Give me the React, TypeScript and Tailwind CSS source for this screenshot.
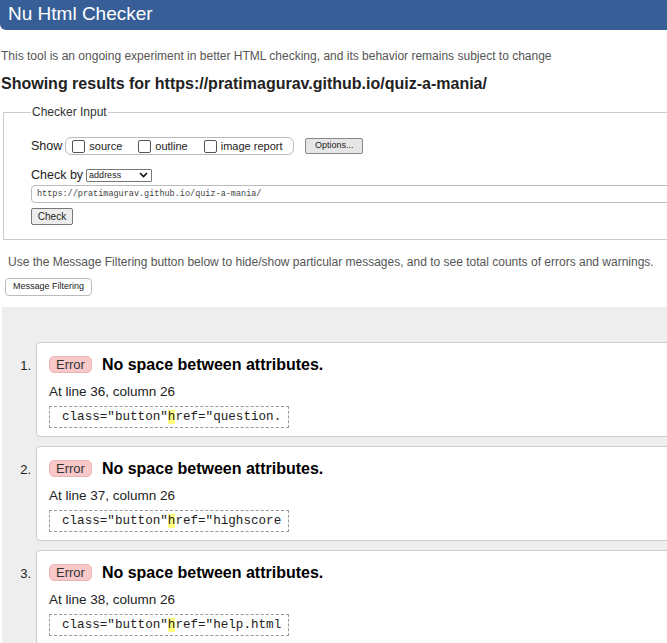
import React from "react";

const errors = [
  { n: 1, line: 36, code: "question." },
  { n: 2, line: 37, code: "highscore" },
  { n: 3, line: 38, code: "help.html" },
];

const Box = () => (
  <span className="inline-block w-[13px] h-[13px] rounded-[2px] border border-[#555] bg-white mr-[4px] align-[-2px]" />
);

const ErrorCard = ({ n, line, code }: { n: number; line: number; code: string }) => (
  <li className="flex">
    <span className="w-[34px] shrink-0 pt-[14px] pr-[5px] text-right text-[13px] text-[#222]">{n}.</span>
    <div className="w-[680px] h-[95px] bg-white border border-[#ccc] rounded-[4px] pl-[12px] pt-[13px]">
      <div className="flex items-center h-[17px]">
        <span className="h-[17px] px-[6px] rounded-[5px] bg-[#f9c9c9] border border-[#eab4b4] text-[13px] leading-[15px] text-[#333]">
          Error
        </span>
        <span className="ml-[10px] text-[16px] font-bold text-black">No space between attributes.</span>
      </div>
      <p className="mt-[11px] text-[13.5px] leading-[16px] text-[#222]">
        At line {line}, column 26
      </p>
      <div className="mt-[6px] inline-block h-[22px] border border-dashed border-[#999] pl-[12px] pr-[7px] font-['Liberation_Mono',monospace] text-[12.6px] leading-[20px] text-[#222] whitespace-pre">
        class="button"<span className="bg-[#ffff80]">h</span>ref="{code}
      </div>
    </div>
  </li>
);

export default function App() {
  return (
    <div className="w-full h-[643px] overflow-hidden bg-white font-['Liberation_Sans',Arial,sans-serif]">
      <div className="w-[720px]">
        <div className="h-[30px] bg-[#375e97] rounded-bl-[6px] pl-[8px] text-[19px] leading-[28px] text-white">
          Nu Html Checker
        </div>
        <p className="mt-[19px] pl-[1px] text-[12px] leading-[15px] text-[#555]">
          This tool is an ongoing experiment in better HTML checking, and its behavior remains subject to change
        </p>
        <h2 className="mt-[10px] pl-[1px] text-[16px] leading-[20px] font-bold text-[#222]">
          Showing results for https://pratimagurav.github.io/quiz-a-mania/
        </h2>

        <fieldset className="mt-[11px] ml-[3px] h-[135px] border border-[#ccc] pl-[27px]">
          <legend className="px-[1px] text-[12px] leading-[14px] text-[#333]">Checker Input</legend>
          <div className="mt-[18px] flex items-center h-[18px] text-[12px] text-[#222]">
            <span className="text-[12.5px]">Show</span>
            <span className="ml-[3px] w-[229px] h-[18px] flex items-center rounded-[6px] border border-[#bbb] pl-[6px] pr-[6px] text-[11px]">
              <Box />source
              <span className="ml-[16px]" />
              <Box />outline
              <span className="ml-[16px]" />
              <Box />image report
            </span>
            <span className="ml-[11px] h-[16px] w-[58px] flex items-center justify-center border border-[#888] rounded-[2px] bg-[#e6e6e6] text-[9px] text-[#222]">
              Options...
            </span>
          </div>
          <div className="mt-[13px] flex items-center h-[14px] text-[12.5px] text-[#222]">
            Check by
            <span className="ml-[3px] w-[66px] h-[13px] flex items-center justify-between border border-[#777] rounded-[1px] pl-[2px] pr-[3px] text-[9px] leading-none">
              address
              <svg width="9" height="6" viewBox="0 0 9 6">
                <path d="M1 1l3.5 3.5L8 1" fill="none" stroke="#111" strokeWidth="1.6" />
              </svg>
            </span>
          </div>
          <div className="mt-[3px] h-[18px] w-[700px] border border-[#bbb] rounded-[4px] pl-[5px] font-['Liberation_Mono',monospace] text-[8.5px] leading-[16px] text-[#444]">
            https://pratimagurav.github.io/quiz-a-mania/
          </div>
          <div className="mt-[5px] w-[42px] h-[17px] flex items-center justify-center border border-[#777] rounded-[2px] bg-[#ececec] text-[10px] text-[#222]">
            Check
          </div>
        </fieldset>

        <p className="mt-[15px] pl-[8px] text-[12px] leading-[15px] text-[#555]">
          Use the Message Filtering button below to hide/show particular messages, and to see total counts of errors and warnings.
        </p>
        <div className="mt-[8px] ml-[5px] w-[87px] h-[18px] flex items-center justify-center border border-[#bbb] rounded-[4px] text-[9px] text-[#222]">
          Message Filtering
        </div>

        <div className="mt-[11px] ml-[2px] bg-[#eeeeee] pt-[35px] pb-[20px]">
          <ol className="flex flex-col gap-[9px]">
            {errors.map((e) => (
              <ErrorCard key={e.n} {...e} />
            ))}
          </ol>
        </div>
      </div>
    </div>
  );
}
